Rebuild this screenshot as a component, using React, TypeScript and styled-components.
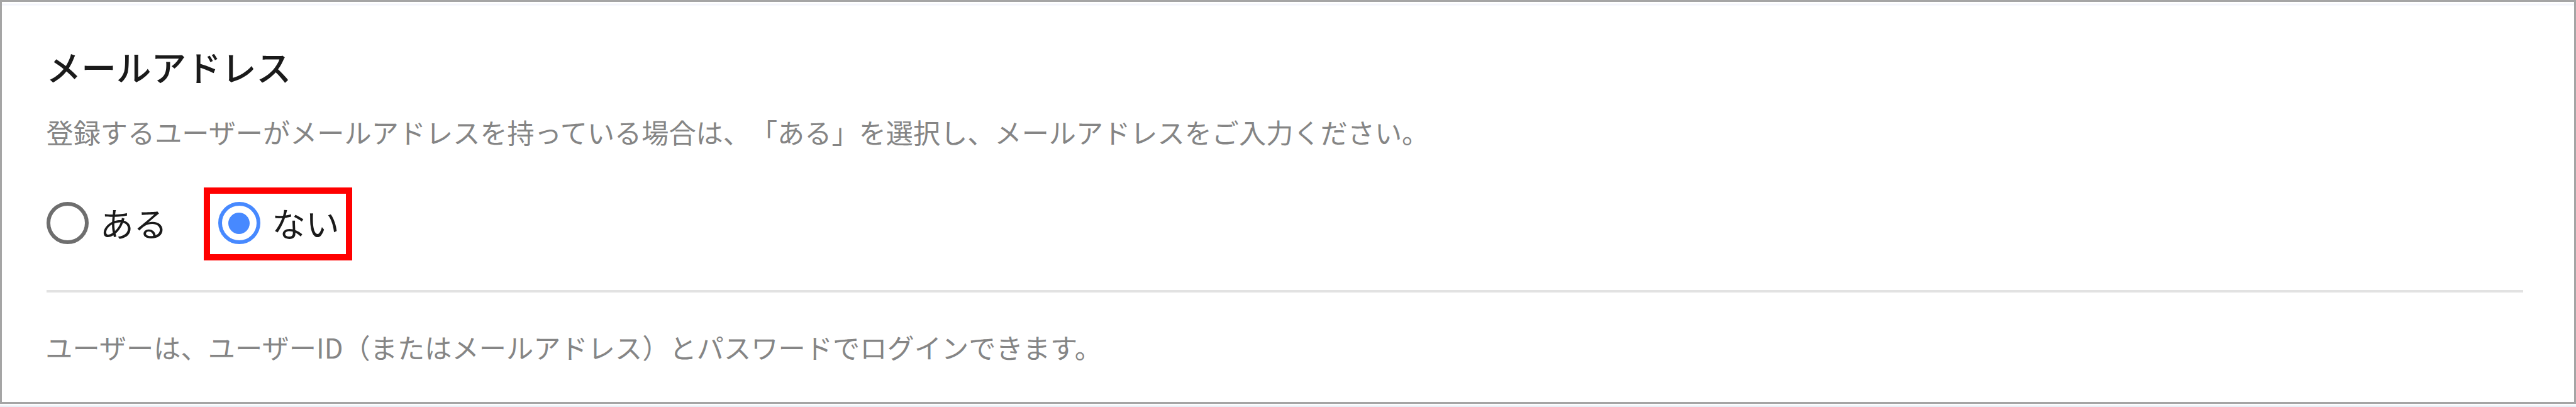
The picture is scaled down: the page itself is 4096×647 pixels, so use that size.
import React from 'react'
import styled, { createGlobalStyle } from 'styled-components'

const accent = '#4789ff'

const RadioOption: React.FC<{
    label: string
    checked?: boolean
    highlighted?: boolean
}> = ({ label, checked = false, highlighted = false }) => (
    <Option role="radio" aria-checked={checked}>
        <Ring $checked={checked}>
            {checked && <Dot />}
        </Ring>
        <OptionLabel>{label}</OptionLabel>
        {highlighted && <Highlight />}
    </Option>
)

const App: React.FC = () => (
    <>
        <GlobalStyle />
        <Page>
            <Card>
                <Title>メールアドレス</Title>
                <Description>
                    登録するユーザーがメールアドレスを持っている場合は、「ある」を選択し、メールアドレスをご入力ください。
                </Description>
                <Options role="radiogroup">
                    <RadioOption label="ある" />
                    <RadioOption label="ない" checked highlighted />
                </Options>
                <Divider />
                <Note>
                    ユーザーは、ユーザーID（またはメールアドレス）とパスワードでログインできます。
                </Note>
            </Card>
        </Page>
    </>
)

const GlobalStyle = createGlobalStyle`
* {
    box-sizing: border-box;
}
body {
    margin: 0;
    background: #fff;
    font-family: "Noto Sans CJK JP", sans-serif;
    text-spacing-trim: space-all;
}
`

const Page = styled.div`
width: 4096px;
height: 647px;
overflow: hidden;
background: linear-gradient(#fff 643px, #e9eef5 646px);
`

const Card = styled.section`
display: flex;
flex-direction: column;
height: 642px;
padding: 74px 81px 0 70.5px;
border: 3px solid #a5a5a5;
background: linear-gradient(#fff 2px, #f1f3fb 4px, #fff 7px);
`

const Title = styled.h2`
margin: 0;
font-size: 55.7px;
font-weight: 500;
line-height: 56px;
color: #1a1a1a;
`

const Description = styled.p`
margin: 54px 0 0;
font-size: 43.18px;
line-height: 44px;
white-space: nowrap;
color: #858585;
`

const Options = styled.div`
display: flex;
gap: 80.6px;
margin-top: 90px;
`

const Option = styled.div`
position: relative;
display: flex;
align-items: center;
gap: 18.4px;
height: 67px;
`

const Ring = styled.span<{ $checked: boolean }>`
display: flex;
align-items: center;
justify-content: center;
width: 67px;
height: 67px;
border: 6.2px solid ${p => p.$checked ? accent : '#6e6e6e'};
border-radius: 50%;
`

const Dot = styled.span`
width: 34px;
height: 34px;
border-radius: 50%;
background: ${accent};
`

const OptionLabel = styled.span`
padding-bottom: 1px;
font-size: 53.7px;
line-height: 56px;
white-space: nowrap;
color: #1a1a1a;
`

const Highlight = styled.span`
position: absolute;
top: -23px;
left: -22.7px;
width: 236px;
height: 116px;
border: 10px solid #f00;
`

const Divider = styled.hr`
width: 100%;
height: 4px;
margin: 73px 0 0;
border: 0;
background: #e2e2e2;
`

const Note = styled(Description)`
margin: 64px 0 0 -1.3px;
font-size: 43.25px;
`

export default App
